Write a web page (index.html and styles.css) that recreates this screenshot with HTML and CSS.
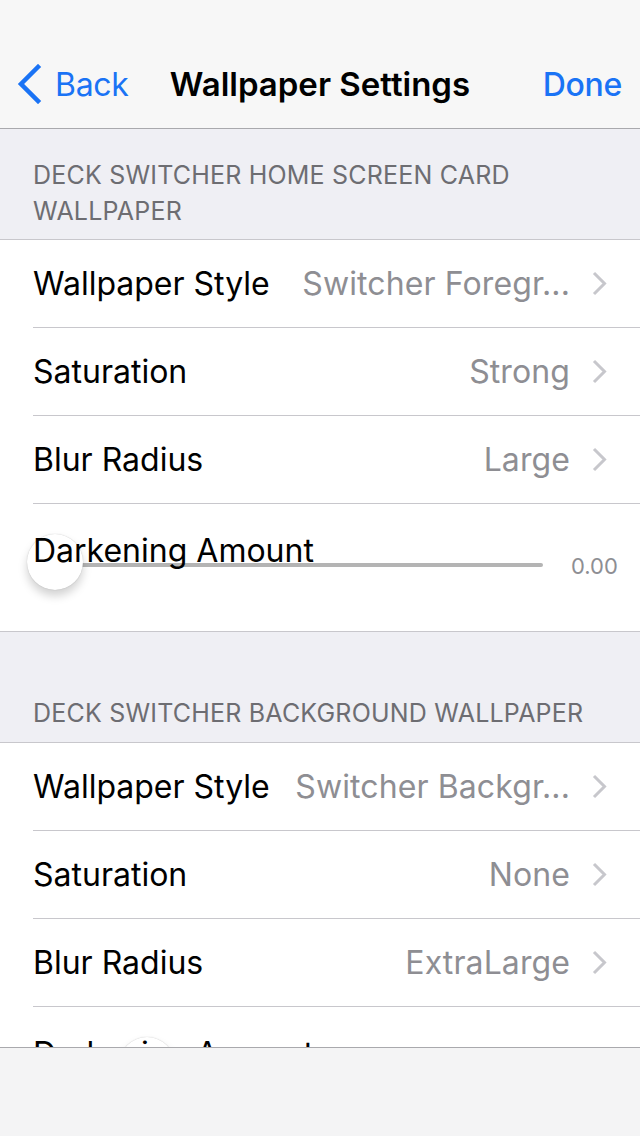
FILE: index.html
```html
<!DOCTYPE html>
<html>
<head>
<meta charset="utf-8">
<link rel="stylesheet" href="styles.css">
</head>
<body>
<div class="screen">
  <header class="navbar">
    <div class="nav-left">
      <svg class="back-chev" width="26" height="40" viewBox="0 0 26 40"><path d="M22 3 L5 20 L22 37" fill="none" stroke="#1a73f5" stroke-width="4.5" stroke-linecap="square"/></svg>
      <span class="nav-link">Back</span>
    </div>
    <div class="nav-title">Wallpaper Settings</div>
    <div class="nav-link nav-right">Done</div>
  </header>

  <div class="section-header first">DECK SWITCHER HOME SCREEN CARD WALLPAPER</div>
  <div class="group">
    <div class="row"><span class="label">Wallpaper Style</span><span class="value">Switcher Foregr...</span><svg class="chev" width="15" height="25" viewBox="0 0 15 25"><path d="M2 2 L12.5 12.5 L2 23" fill="none" stroke="#c7c7cc" stroke-width="3"/></svg></div>
    <div class="row"><span class="label">Saturation</span><span class="value">Strong</span><svg class="chev" width="15" height="25" viewBox="0 0 15 25"><path d="M2 2 L12.5 12.5 L2 23" fill="none" stroke="#c7c7cc" stroke-width="3"/></svg></div>
    <div class="row"><span class="label">Blur Radius</span><span class="value">Large</span><svg class="chev" width="15" height="25" viewBox="0 0 15 25"><path d="M2 2 L12.5 12.5 L2 23" fill="none" stroke="#c7c7cc" stroke-width="3"/></svg></div>
    <div class="row slider-row">
      <span class="label slider-label">Darkening Amount</span>
      <div class="slider">
        <div class="track"></div>
        <div class="thumb"></div>
      </div>
      <span class="slider-val">0.00</span>
    </div>
  </div>

  <div class="section-header second">DECK SWITCHER BACKGROUND WALLPAPER</div>
  <div class="group">
    <div class="row"><span class="label">Wallpaper Style</span><span class="value">Switcher Backgr...</span><svg class="chev" width="15" height="25" viewBox="0 0 15 25"><path d="M2 2 L12.5 12.5 L2 23" fill="none" stroke="#c7c7cc" stroke-width="3"/></svg></div>
    <div class="row"><span class="label">Saturation</span><span class="value">None</span><svg class="chev" width="15" height="25" viewBox="0 0 15 25"><path d="M2 2 L12.5 12.5 L2 23" fill="none" stroke="#c7c7cc" stroke-width="3"/></svg></div>
    <div class="row"><span class="label">Blur Radius</span><span class="value">ExtraLarge</span><svg class="chev" width="15" height="25" viewBox="0 0 15 25"><path d="M2 2 L12.5 12.5 L2 23" fill="none" stroke="#c7c7cc" stroke-width="3"/></svg></div>
    <div class="row slider-row">
      <span class="label slider-label">Darkening Amount</span>
      <div class="slider">
        <div class="track"></div>
        <div class="thumb thumb2"></div>
      </div>
      <span class="slider-val">0.00</span>
    </div>
  </div>

  <footer class="toolbar"></footer>
</div>
</body>
</html>
```
FILE: styles.css
```css
* { box-sizing: border-box; }
html, body { margin: 0; padding: 0; }
body {
  font-family: Inter, "Liberation Sans", sans-serif;
  background: #efeff4;
  width: 640px;
  height: 1136px;
  overflow: hidden;
}
.screen { position: relative; width: 640px; height: 1136px; overflow: hidden; }
.navbar {
  height: 129px;
  padding-top: 40px;
  background: #f7f7f7;
  border-bottom: 1px solid #a9a9ad;
  display: flex;
  align-items: center;
  position: relative;
}
.nav-left { display: flex; align-items: center; padding-left: 16px; width: 160px; }
.back-chev { display: block; margin-right: 13px; }
.nav-link { color: #1a73f5; font-size: 32px; letter-spacing: -0.3px; }
.nav-title {
  position: absolute; left: 0; right: 0; top: 40px; bottom: 0;
  display: flex; align-items: center; justify-content: center;
  font-size: 33px; font-weight: 600; color: #000; letter-spacing: 0;
  pointer-events: none;
}
.nav-right { margin-left: auto; padding-right: 18px; font-weight: 500; }
.section-header {
  color: #6d6d72;
  font-size: 25px;
  line-height: 36px;
  padding: 0 8px 0 33px;
  letter-spacing: 0.2px;
  border-bottom: 1px solid #c8c7cc;
}
.section-header.first { padding-top: 28px; padding-bottom: 10px; }
.section-header.second { padding-top: 63px; padding-bottom: 11px; border-top: 1px solid #c8c7cc; }
.group { background: #fff; padding-left: 33px; }
.row {
  height: 88px;
  display: flex;
  align-items: center;
  border-bottom: 1px solid #c8c7cc;
  padding-right: 33px;
}
.group .row:last-child { border-bottom: none; }
.label { font-size: 32px; color: #000; letter-spacing: 0; white-space: nowrap; }
.value { margin-left: auto; font-size: 32px; color: #8e8e93; letter-spacing: 0.1px; white-space: nowrap; }
.chev { display: block; margin-left: 22px; flex: none; }
.slider-row { height: 127px; position: relative; padding-right: 0; align-items: flex-start; }
.slider-label { position: absolute; left: 0; top: 27px; z-index: 2; }
.slider { position: relative; flex: 1; height: 60px; margin-top: 28px; margin-right: 28px; }
.track { position: absolute; left: 22px; right: 0; top: 31px; height: 4px; border-radius: 2px; background: #b4b4b4; }
.thumb {
  position: absolute; left: -6px; top: 2px;
  width: 56px; height: 56px; border-radius: 50%;
  background: #fff;
  box-shadow: 0 6px 10px rgba(0,0,0,0.18), 0 0 1px rgba(0,0,0,0.25);
  z-index: 1;
}
.thumb2 { left: 86px; }
.slider-val { flex: 0 0 69px; white-space: nowrap; font-size: 22px; color: #8e8e93; margin-top: 49px; }
.toolbar {
  position: absolute; left: 0; right: 0; bottom: 0; height: 89px;
  background: #f4f4f5;
  border-top: 1px solid #a9a9ad;
  z-index: 5;
}
```
